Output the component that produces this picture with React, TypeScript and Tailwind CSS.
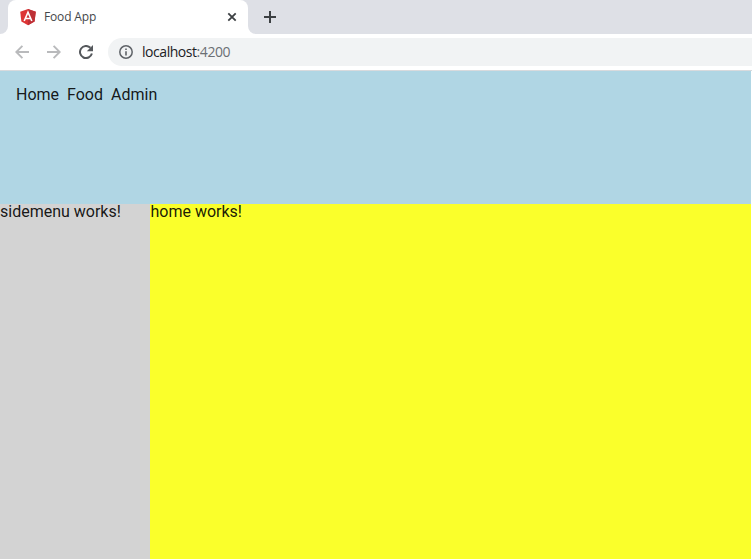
import type { ReactNode } from "react";

function AngularLogo() {
  return (
    <svg width="16" height="18" viewBox="0 0 16 18" className="shrink-0">
      <path d="M8 1 L15.8 3.7 L14.6 13.5 L8 17.2 L1.4 13.5 L0.2 3.7 Z" fill="#dd3535" />
      <path d="M8 1 L15.8 3.7 L14.6 13.5 L8 17.2 Z" fill="#bd3036" />
      <path d="M4.2 13 L8 4.2 L11.8 13 M5.9 10.5 H10.1" fill="none" stroke="#fff" strokeWidth="1.6" />
    </svg>
  );
}

function ArrowIcon({ className }: { className: string }) {
  return (
    <svg width="14" height="14" viewBox="0 0 14 14" className={className}>
      <path d="M14 7 H1.6 M7.4 0.9 L1.3 7 L7.4 13.1" fill="none" stroke="#b9babc" strokeWidth="1.9" />
    </svg>
  );
}

function ReloadIcon() {
  return (
    <svg width="14" height="14" viewBox="0 0 14 14" className="ml-[18px] shrink-0">
      <path d="M12.9 8.6 A6.05 6.05 0 1 1 11.4 2.8" fill="none" stroke="#55585c" strokeWidth="2" />
      <path d="M14 0 V6.2 H7.8 Z" fill="#55585c" />
    </svg>
  );
}

function InfoIcon() {
  return (
    <svg width="14" height="14" viewBox="0 0 14 14" className="shrink-0">
      <circle cx="7" cy="7" r="6.2" fill="none" stroke="#5f6368" strokeWidth="1.5" />
      <path d="M7 6.2 V10.4 M7 3.5 V5.1" stroke="#5f6368" strokeWidth="1.6" />
    </svg>
  );
}

function TabStrip() {
  return (
    <div className="flex h-[34px] bg-[#dee0e6]">
      <div className="w-2 bg-white">
        <div className="h-full w-2 rounded-br-lg bg-[#dee0e6]" />
      </div>
      <div className="flex h-full w-60 items-center rounded-t-lg bg-white pl-3 pr-[11px]">
        <AngularLogo />
        <span className="ml-2 whitespace-nowrap font-['Open_Sans','Noto_Sans',sans-serif] text-[12px] leading-4 tracking-[-0.15px] text-[#45474a]">
          Food App
        </span>
        <svg width="10" height="10" viewBox="0 0 10 10" className="ml-auto">
          <path d="M1.3 1.3 L8.7 8.7 M8.7 1.3 L1.3 8.7" stroke="#3c4043" strokeWidth="1.8" />
        </svg>
      </div>
      <div className="w-2 bg-white">
        <div className="h-full w-2 rounded-bl-lg bg-[#dee0e6]" />
      </div>
      <div className="flex items-center pl-2">
        <svg width="12" height="12" viewBox="0 0 12 12">
          <path d="M6 0 V12 M0 6 H12" stroke="#3c4043" strokeWidth="2" />
        </svg>
      </div>
    </div>
  );
}

function Toolbar() {
  return (
    <div className="flex h-9 items-center bg-white pl-[15px]">
      <ArrowIcon className="shrink-0" />
      <ArrowIcon className="ml-[18px] shrink-0 rotate-180" />
      <ReloadIcon />
      <div className="ml-[15px] flex h-7 flex-1 items-center rounded-l-full bg-[#f1f3f4] pl-[11px]">
        <InfoIcon />
        <span className="ml-[9px] whitespace-nowrap font-['Open_Sans','Noto_Sans',sans-serif] text-[14px] leading-5 tracking-[-0.45px] text-[#202124]">
          localhost<span className="text-[#6b6f74]">:4200</span>
        </span>
      </div>
    </div>
  );
}

function NavLink({ children }: { children: ReactNode }) {
  return <a className="whitespace-nowrap">{children}</a>;
}

export default function App() {
  return (
    <div className="flex h-[559px] w-[752px] flex-col overflow-hidden bg-white">
      <TabStrip />
      <Toolbar />
      <div className="flex flex-1 flex-col border-t border-[#d8dadd] font-['Roboto',sans-serif] text-[16px] leading-4 text-black/90">
        <nav className="mr-px flex h-[133px] gap-2 bg-[#b0d6e4] pl-4 pt-4">
          <NavLink>Home</NavLink>
          <NavLink>Food</NavLink>
          <NavLink>Admin</NavLink>
        </nav>
        <div className="mr-px flex flex-1">
          <aside className="w-[150px] bg-[#d3d3d3]">sidemenu works!</aside>
          <main className="flex-1 bg-[#faff2b] pl-[0.5px]">home works!</main>
        </div>
      </div>
    </div>
  );
}
